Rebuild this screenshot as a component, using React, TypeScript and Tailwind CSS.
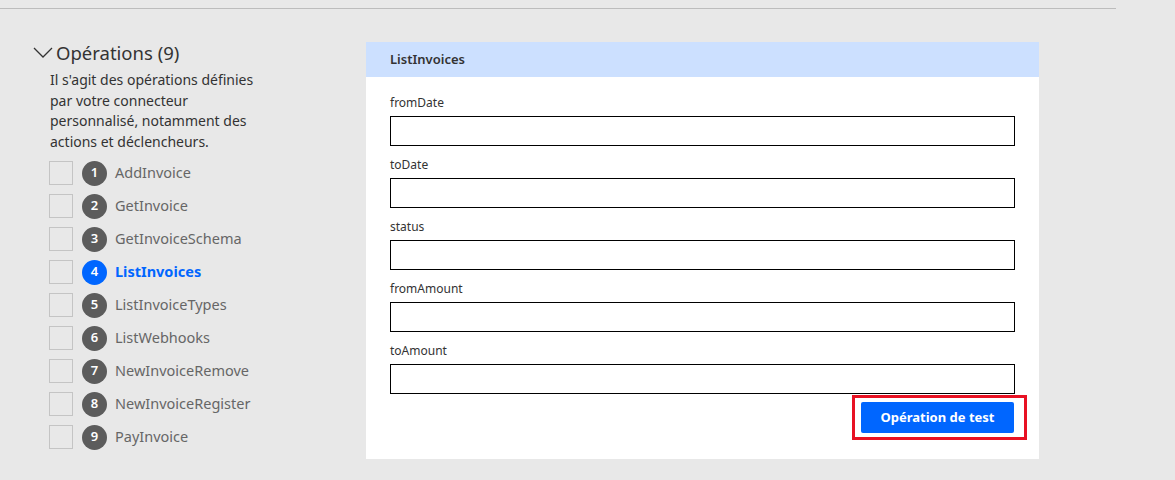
const operations = [
  "AddInvoice",
  "GetInvoice",
  "GetInvoiceSchema",
  "ListInvoices",
  "ListInvoiceTypes",
  "ListWebhooks",
  "NewInvoiceRemove",
  "NewInvoiceRegister",
  "PayInvoice",
];

const fields = ["fromDate", "toDate", "status", "fromAmount", "toAmount"];

const ACTIVE = "ListInvoices";

function Chevron() {
  return (
    <svg width="20" height="12" viewBox="0 0 20 12" fill="none" className="shrink-0">
      <path d="M1 1 L10 10 L19 1" stroke="#333" strokeWidth="1.3" />
    </svg>
  );
}

export default function App() {
  return (
    <div
      className="h-[480px] w-[1175px] overflow-hidden bg-[#e8e8e8] text-[#333]"
      style={{ fontFamily: '"Segoe UI", "Noto Sans", sans-serif' }}
    >
      <div className="pt-[8px]">
        <div className="h-px w-[1116px] bg-[#bcbcbc]" />
      </div>

      <div className="flex pt-[32px]">
        <aside className="w-[366px] shrink-0 pl-[33px]">
          <div className="flex items-center gap-[3px]">
            <Chevron />
            <h2 className="text-[18.5px] leading-[24px] text-[#333]">Opérations (9)</h2>
          </div>
          <p className="mt-[5px] w-[232px] pl-[17px] text-[14px] leading-[20.5px] text-[#333]">
            Il s'agit des opérations définies par votre connecteur personnalisé, notamment des
            actions et déclencheurs.
          </p>
          <ul className="mt-[9px] flex flex-col gap-[9px] pl-[16px]">
            {operations.map((op, i) => {
              const active = op === ACTIVE;
              return (
                <li key={op} className="flex h-[24px] items-center">
                  <span className="h-[24px] w-[24px] border border-[#c4c4c4]" />
                  <span
                    className={
                      "ml-[9px] flex h-[25px] w-[25px] items-center justify-center rounded-full text-[13px] font-semibold text-white " +
                      (active ? "bg-[#0066ff]" : "bg-[#5c5c5c]")
                    }
                  >
                    {i + 1}
                  </span>
                  <span
                    className={
                      "ml-[8px] text-[14.5px] " +
                      (active ? "font-bold text-[#0066ff]" : "text-[#666]")
                    }
                  >
                    {op}
                  </span>
                </li>
              );
            })}
          </ul>
        </aside>

        <section className="mt-[1px] h-[417px] w-[673px] bg-white">
          <div className="flex h-[35px] items-center bg-[#cce0ff] px-[24px] text-[13px] font-semibold text-[#333]">
            ListInvoices
          </div>
          <div className="px-[24px] pt-[19px]">
            {fields.map((f) => (
              <div key={f} className="mb-[12px]">
                <label className="block text-[12px] leading-[14px] text-[#333]">{f}</label>
                <div className="mt-[6px] h-[30px] w-[625px] border border-black bg-white" />
              </div>
            ))}
            <div className="-mr-[12px] -mt-[11px] flex justify-end">
              <div className="border-[3px] border-[#e81123] pb-[4px] pl-[6px] pr-[10px] pt-[4px]">
                <button className="block h-[31px] w-[153px] rounded-[2px] bg-[#0066ff] text-[13px] font-bold text-white">
                  Opération de test
                </button>
              </div>
            </div>
          </div>
        </section>
      </div>
    </div>
  );
}
